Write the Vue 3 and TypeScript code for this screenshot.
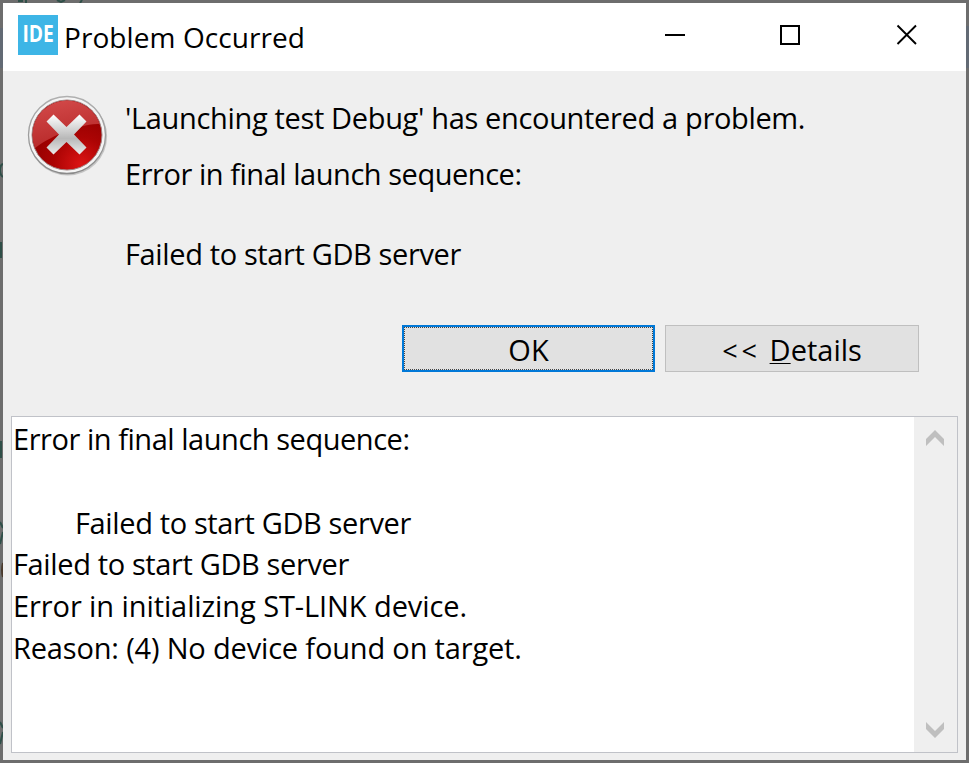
<script setup lang="ts">
interface LogLine {
  text: string
  tracking: number
}

const logLines: LogLine[] = [
  { text: 'Error in final launch sequence:', tracking: -0.46 },
  { text: '', tracking: 0 },
  { text: '\tFailed to start GDB server', tracking: -0.37 },
  { text: 'Failed to start GDB server', tracking: -0.37 },
  { text: 'Error in initializing ST-LINK device.', tracking: -0.09 },
  { text: 'Reason: (4) No device found on target.', tracking: -0.17 },
]
</script>

<template>
  <div class="desktop">
    <svg class="backdrop" width="969" height="763" viewBox="0 0 969 763" fill="none" stroke="#2f4f48" stroke-width="2">
      <path d="M18 1H23M26 0V3M57 0L61 2L65 0M82 0L80 3" />
      <path d="M3 164Q0 165 0 170T3 177M1 242V258M1 441V458M0 522L3 528M3 532L0 544M0 722L3 728M3 732L0 744" />
      <path d="M3 563Q1 570 3 577" stroke="#4a3a2c" />
      <path d="M1.500 28V68M967.500 26V68" stroke="#626a74" stroke-width="3" />
    </svg>
    <section class="dialog" role="alertdialog">
      <header class="titlebar">
        <span class="app-icon"><span class="app-name">IDE</span></span>
        <h1 class="title">Problem Occurred</h1>
        <svg class="caption-icons" width="252" height="22" viewBox="0 0 252 22" fill="none" stroke="#000">
          <path d="M0 11H20" stroke-width="2" />
          <rect x="116" y="2" width="18" height="18" stroke-width="2" />
          <path d="M232.500 1.500L251 20M251 1.500L232.500 20" stroke-width="1.900" />
        </svg>
      </header>

      <div class="message">
        <svg class="error-icon" width="82" height="82" viewBox="0 0 82 82">
          <defs>
            <linearGradient id="rim" x1="0" y1="0" x2="0" y2="1">
              <stop offset="0" stop-color="#b0b0b0" />
              <stop offset="1" stop-color="#8a8a8a" />
            </linearGradient>
            <radialGradient id="red" cx=".7" cy=".92" r=".7">
              <stop offset="0" stop-color="#dc1414" />
              <stop offset=".55" stop-color="#ac0404" />
              <stop offset="1" stop-color="#960000" />
            </radialGradient>
            <linearGradient id="gloss" x1="0" y1="0" x2=".3" y2="1">
              <stop offset="0" stop-color="#d85050" />
              <stop offset="1" stop-color="#b42525" />
            </linearGradient>
            <linearGradient id="cross" x1="0" y1="0" x2="0" y2="1">
              <stop offset="0" stop-color="#fff" />
              <stop offset=".6" stop-color="#b8b8b8" />
              <stop offset="1" stop-color="#ececec" />
            </linearGradient>
            <clipPath id="disc"><circle cx="40" cy="40" r="34.500" /></clipPath>
          </defs>
          <circle cx="40.800" cy="41.300" r="39.300" fill="#999" opacity=".5" />
          <circle cx="40" cy="40" r="38.500" fill="#f4f4f4" stroke="url(#rim)" stroke-width="1.300" />
          <circle cx="40" cy="40" r="35" fill="url(#red)" stroke="#a08080" stroke-width="1" />
          <path d="M0 0H82V29C65 28 56 31 44 35C28 40 17 46 7 54L0 59Z" fill="url(#gloss)" clip-path="url(#disc)" />
          <path d="M26.500 19.500L39.500 32L52.500 19.500L59.500 26.500L47 39.500L59.500 52.500L52.500 59.500L39.500 47L26.500 59.500L19.500 52.500L32 39.500L19.500 26.500Z" fill="url(#cross)" />
        </svg>
        <div class="message-text">
          <p class="summary">'Launching test Debug' has encountered a problem.</p>
          <p class="reason">Error in final launch sequence:</p>
          <p class="cause">Failed to start GDB server</p>
        </div>
      </div>

      <div class="actions">
        <button class="btn primary" type="button">OK</button>
        <button class="btn" type="button"><span class="arrows">&lt;&lt;</span> <span class="mnemonic">D</span>etails</button>
      </div>

      <div class="details">
        <div class="log">
          <div v-for="(line, i) in logLines" :key="i" class="log-line" :style="{ letterSpacing: line.tracking + 'px' }">{{ line.text }}</div>
        </div>
        <div class="scrollbar">
          <svg width="18" height="16" viewBox="0 0 18 16"><path d="M0 9L9 0L18 9V16L9 7L0 16Z" fill="#bfbfbf" /></svg>
          <svg width="18" height="16" viewBox="0 0 18 16"><path d="M0 0L9 9L18 0V7L9 16L0 7Z" fill="#bfbfbf" /></svg>
        </div>
      </div>
    </section>
  </div>
</template>

<style>
body { margin: 0; background: #6d6d6d; overflow: hidden; }
</style>

<style scoped>
.desktop {
  position: relative;
  box-sizing: border-box;
  width: 969px;
  height: 763px;
  padding: 3px;
  background: #6d6d6d;
  font-family: "Open Sans", "Noto Sans", sans-serif;
  font-size: 29px;
  color: #000;
}
.backdrop { position: absolute; left: 0; top: 0; }
.dialog { position: relative; display: flex; flex-direction: column; width: 963px; height: 757px; background: #efefef; }
.titlebar { display: flex; align-items: center; height: 68px; background: #fff; flex: none; }
.app-icon { display: flex; align-items: center; justify-content: center; width: 40px; height: 40px; margin: 0 0 4px 15px; background: #3db5e6; color: #fff; }
.app-name { font: 700 23.5px/36px "Open Sans", sans-serif; height: 40px; transform: scaleX(.82); }
.title { margin: 0 0 0 6px; font-size: 28px; font-weight: 400; line-height: 40px; letter-spacing: .08px; white-space: nowrap; }
.caption-icons { margin: 0 49px 4px auto; }
.message { display: flex; height: 254px; flex: none; }
.error-icon { margin: 24px 0 0 24px; flex: none; }
.message-text { margin: 27px 0 0 16px; white-space: nowrap; line-height: 40px; }
p { margin: 0; }
.summary { letter-spacing: -.34px; }
.reason { margin-top: 16px; letter-spacing: -.46px; }
.cause { margin-top: 40px; letter-spacing: -.37px; }
.actions { display: flex; justify-content: flex-end; gap: 10px; height: 47px; padding-right: 47px; flex: none; }
.btn { box-sizing: border-box; width: 254px; height: 47px; padding: 2px 0 0; border: 1px solid #bfbfbf; background: #e1e1e1; font: inherit; line-height: 43px; color: #000; }
.primary { width: 253px; border: 2px solid #0078d7; outline: 1px dotted #444; outline-offset: -3px; line-height: 41px; }
.arrows { margin-right: 1px; font-size: 27px; letter-spacing: 4px; }
.mnemonic { text-decoration: underline; text-decoration-thickness: 1px; text-underline-offset: 2px; }
.details { box-sizing: border-box; display: flex; margin: 44px 8px 0; height: 337px; border: 1px solid #c0c2c8; background: #fff; }
.log { flex: 1; padding-top: 1px; padding-left: 1px; white-space: pre; tab-size: 62px; }
.log-line { height: 41.75px; line-height: 41.75px; }
.scrollbar { display: flex; flex-direction: column; justify-content: space-between; align-items: center; width: 43px; padding: 13px 2px 14px 0; box-sizing: border-box; background: #efefef; }
</style>
